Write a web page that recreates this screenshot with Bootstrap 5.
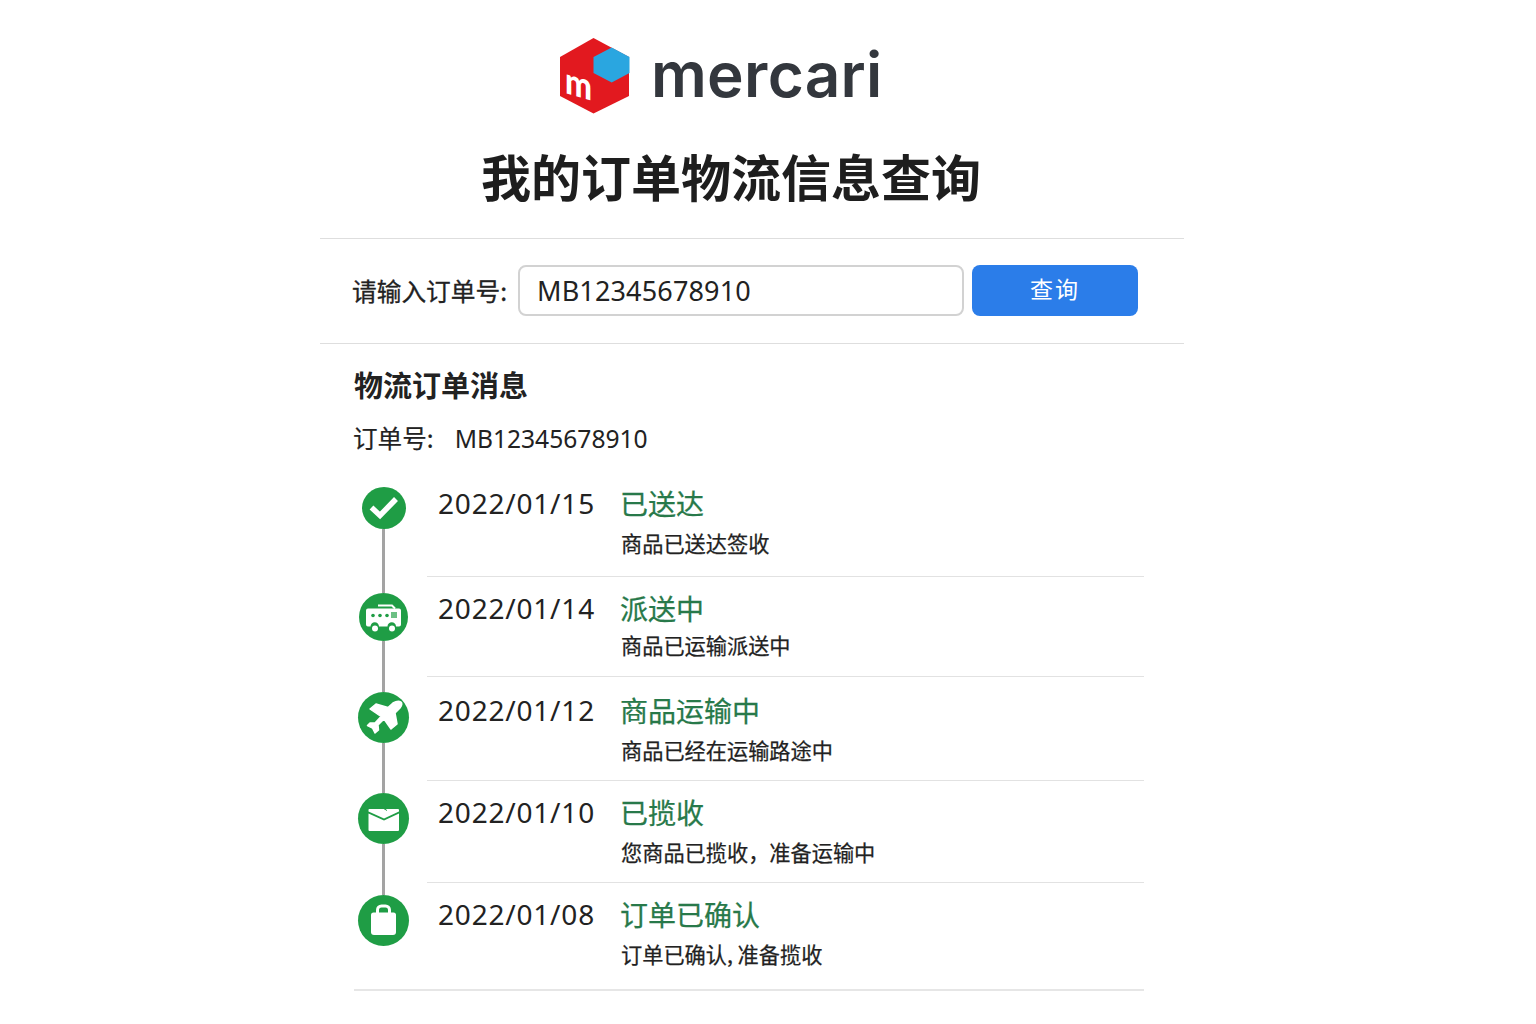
<!doctype html>
<html lang="zh-CN">
<head>
<meta charset="utf-8">
<title>我的订单物流信息查询</title>
<link href="https://cdn.jsdelivr.net/npm/bootstrap@5.3.0/dist/css/bootstrap.min.css" rel="stylesheet">
<style>
body{background:#fff;font-family:"Noto Sans","Noto Sans CJK SC",sans-serif;color:#222}
.sheet{width:864px;margin-left:320px}
.logo-row{height:114px;padding-top:38px;padding-left:240px;gap:21px}
.logo-word{font-family:Inter,sans-serif;font-weight:600;font-size:62px;line-height:76px;color:#33373d;margin-top:-1px;letter-spacing:.3px}
.page-title{font-family:"Noto Sans CJK SC",sans-serif;font-weight:700;font-size:50px;line-height:64px;margin:0;padding:29px 42px 0 0;text-align:center;color:#1e1e1e;height:124px}
.rule{height:1px;background:#dedede}
.search-row{height:104px;padding:26px 46px 0 32px}
.search-label{font-size:24.7px;width:166px;color:#222;margin:0;padding-top:7px;white-space:nowrap;font-family:"Noto Sans CJK SC",sans-serif;-webkit-text-stroke:.3px #222}
.search-input.form-control{width:446px;height:51px;font-size:27px;padding:0 17px;border:2px solid #d2d2d2;border-radius:8px;color:#222;font-family:"Noto Sans","Noto Sans CJK SC",sans-serif;letter-spacing:.15px}
.search-btn.btn{width:166px;height:51px;margin-left:8px;background:#2b7de9;border:0;border-radius:8px;font-size:23px;letter-spacing:2px;color:#fff;font-family:"Noto Sans CJK SC",sans-serif;padding:0 0 5px}
.detail{padding:0 40px 0 34px}
.detail-title{font-family:"Noto Sans CJK SC",sans-serif;font-weight:700;font-size:29px;line-height:40px;margin:20px 0 0;color:#222}
.order-no{font-size:24.6px;line-height:34px;margin:16px 0 0 -1px;color:#222;font-family:"Noto Sans CJK SC",sans-serif;white-space:nowrap;-webkit-text-stroke:.2px #222}
.order-value{margin-left:21px;font-family:"Noto Sans",sans-serif;-webkit-text-stroke:0}
.track{border-bottom:2px solid #e6e6e6;margin-top:33px;height:502px}
.rail{width:59px;margin-right:14px;margin-top:-2px}
.dot{background:#1f9d45;border-radius:50%;flex:none;width:51px;height:51px}
.dot svg{display:block}
.dot-a{width:44px;height:42px}
.dot-b{width:49px;height:48px}
.link-line{width:2.5px;background:#a3a3a3;flex:none}
.events{flex:1;margin-top:-9px}
.event{border-bottom:1px solid #e2e2e2;padding-left:11px;padding-top:5px}
.event:last-child{border-bottom:0}
.event-head{margin-top:-2px;margin-bottom:5px}
.event-date{width:182px;font-size:28px;line-height:40px;color:#222;letter-spacing:.8px;flex:none}
.event-state{font-family:"Noto Sans CJK SC",sans-serif;font-size:28px;line-height:40px;color:#28794a;-webkit-text-stroke:.25px #28794a}
.event-note{font-family:"Noto Sans CJK SC",sans-serif;font-size:21.2px;line-height:30px;color:#222;margin:3px 0 0 183px;-webkit-text-stroke:.25px #222}
.event-note-tight{margin-top:-3px}
</style>
</head>
<body>
<main class="sheet">
  <div class="logo-row d-flex align-items-start">
    <svg width="70" height="76" viewBox="0 0 70 76" aria-label="logo">
      <polygon points="33.500,0 69,19 69,58 33.500,75.500 0,58 0,19" fill="#e2191f"/>
      <polygon points="51.700,9.500 69.500,19 69.500,35 51.700,44.500 33.500,35 33.500,19" fill="#2aa6e0"/>
      <text x="0" y="0" transform="translate(5,55) skewY(16) scale(1,1.15)" font-family="Lato,sans-serif" font-weight="900" font-size="32" fill="#fff">m</text>
    </svg>
    <div class="logo-word">mercari</div>
  </div>
  <h1 class="page-title">我的订单物流信息查询</h1>
  <div class="rule"></div>
  <form class="search-row d-flex align-items-start">
    <label class="search-label" for="orderInput">请输入订单号:</label>
    <input id="orderInput" class="form-control search-input" value="MB12345678910">
    <button type="button" class="btn search-btn ms-auto">查询</button>
  </form>
  <div class="rule"></div>
  <section class="detail">
    <h2 class="detail-title">物流订单消息</h2>
    <p class="order-no">订单号:<span class="order-value">MB12345678910</span></p>
    <div class="track d-flex">
      <div class="rail d-flex flex-column align-items-center">
        <div class="dot dot-a"><svg width="44" height="42" viewBox="0 0 44 42"><path d="M9.500 20.500l8.500 8L34 12" fill="none" stroke="#fff" stroke-width="5.500"/></svg></div>
        <div class="link-line" style="height:64px"></div>
        <div class="dot dot-b"><svg width="49" height="48" viewBox="0 0 49 48"><path d="M19 12.500h14l3 3" fill="none" stroke="#fff" stroke-width="2"/><path d="M9 15.500h31a2 2 0 0 1 2 2v14a2 2 0 0 1-2 2h-3a4 4 0 0 0-8.500 0H20a4 4 0 0 0-8.500 0H9a2 2 0 0 1-2-2v-14a2 2 0 0 1 2-2z" fill="#fff"/><circle cx="16" cy="35.500" r="3" fill="#fff"/><circle cx="33" cy="35.500" r="3" fill="#fff"/><circle cx="14" cy="22.500" r="1.800" fill="#1f9d45"/><circle cx="21" cy="22.500" r="1.800" fill="#1f9d45"/><circle cx="28" cy="22.500" r="1.800" fill="#1f9d45"/><rect x="32" y="19" width="6" height="6" fill="#6cc084"/></svg></div>
        <div class="link-line" style="height:51px"></div>
        <div class="dot"><svg width="51" height="51" viewBox="0 0 51 51"><path d="M43 10Q45 12 42 16L37 21 39 32 33 37 26 27 20 33 20.500 38 17 41 14.500 36 9.500 33.500 12 31 17 31 23 24.500 12 17 18 12 30 15.500 35 11Q40 8 43 10Z" fill="#fff" stroke="#fff" stroke-width="1.500" stroke-linejoin="round"/></svg></div>
        <div class="link-line" style="height:50px"></div>
        <div class="dot"><svg width="51" height="51" viewBox="0 0 51 51"><path d="M11 16h29a1 1 0 0 1 1 1v1.500l-15 7-15.500-7V17a1 1 0 0 1 .5-1z" fill="#fff"/><path d="M10.500 20.500L26 27.500l15-7V37a1 1 0 0 1-1 1H11.500a1 1 0 0 1-1-1z" fill="#fff"/><path d="M24 14.500l5 3" stroke="#1f9d45" stroke-width="1"/></svg></div>
        <div class="link-line" style="height:51px"></div>
        <div class="dot"><svg width="51" height="51" viewBox="0 0 51 51"><path d="M19.500 19v-4a4 4 0 0 1 4-4h4a4 4 0 0 1 4 4v4" fill="none" stroke="#fff" stroke-width="3"/><path d="M15.500 17.500h20a2.500 2.500 0 0 1 2.500 2.500v17a3 3 0 0 1-3 3H16a3 3 0 0 1-3-3V20a2.500 2.500 0 0 1 2.500-2.500z" fill="#fff"/></svg></div>
      </div>
      <div class="events">
        <div class="event" style="height:97px"><div class="d-flex event-head"><div class="event-date">2022/01/15</div><div class="event-state">已送达</div></div><div class="event-note">商品已送达签收</div></div>
        <div class="event" style="height:100px;padding-top:13px"><div class="d-flex event-head"><div class="event-date">2022/01/14</div><div class="event-state">派送中</div></div><div class="event-note event-note-tight">商品已运输派送中</div></div>
        <div class="event" style="height:104px;padding-top:15px"><div class="d-flex event-head"><div class="event-date">2022/01/12</div><div class="event-state">商品运输中</div></div><div class="event-note">商品已经在运输路途中</div></div>
        <div class="event" style="height:102px;padding-top:13px"><div class="d-flex event-head"><div class="event-date">2022/01/10</div><div class="event-state">已揽收</div></div><div class="event-note">您商品已揽收，准备运输中</div></div>
        <div class="event" style="height:107px;padding-top:13px"><div class="d-flex event-head"><div class="event-date">2022/01/08</div><div class="event-state">订单已确认</div></div><div class="event-note">订单已确认, 准备揽收</div></div>
      </div>
    </div>
  </section>
</main>
</body>
</html>
